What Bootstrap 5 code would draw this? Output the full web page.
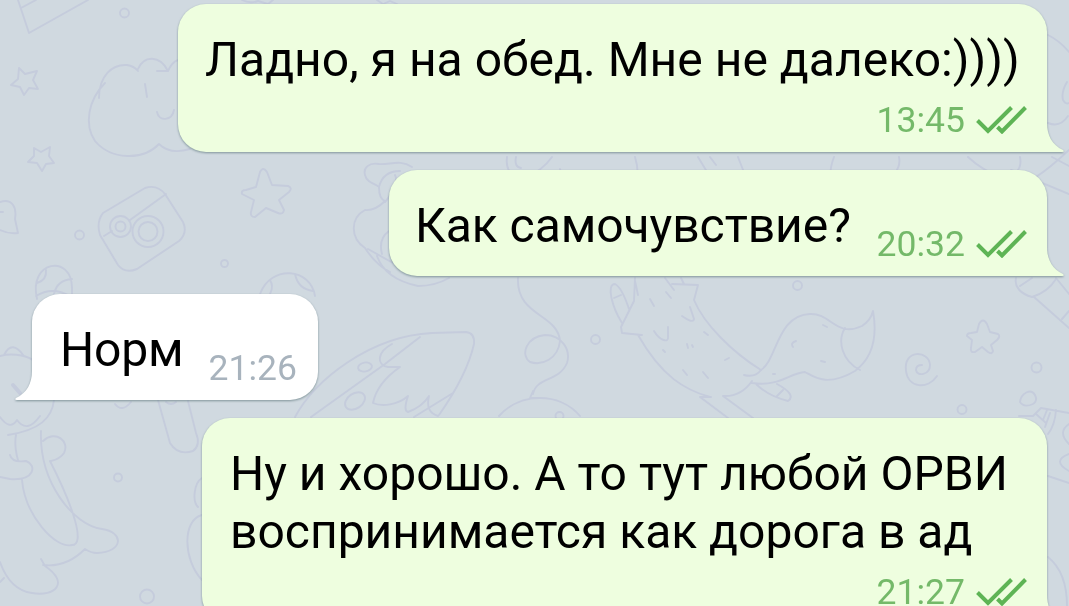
<!DOCTYPE html>
<html lang="ru">
<head>
  <meta charset="UTF-8" />
  <meta name="viewport" content="width=device-width, initial-scale=1.0"/>
  <title>Чат</title>
  <link href="https://cdn.jsdelivr.net/npm/bootstrap@5.3.0/dist/css/bootstrap.min.css" rel="stylesheet"/>
  <style>
    :root {
      --chat-bg: #d0d9e0;
      --doodle: #c5ccdc;
      --bubble-out: #eefedf;
      --time-out: #74b969;
      --check: #5eb455;
      --time-in: #a8b3bd;
    }
    body {
      background-color: var(--chat-bg);
      font-family: Roboto, sans-serif;
      color: #000;
    }
    .chat {
      width: 1069px;
      height: 606px;
      padding: 4px 22px 0 32px;
      gap: 18px;
    }
    .wallpaper {
      fill: none;
      stroke: var(--doodle);
      stroke-width: 1.9;
      stroke-linecap: round;
      stroke-linejoin: round;
    }
    .bubble {
      border-radius: 28px;
      padding: 27px 28px 0;
      font-size: 48px;
      line-height: 58px;
      white-space: nowrap;
      filter: drop-shadow(0 1.5px .8px rgba(85, 110, 115, .65));
    }
    .bubble-out {
      background-color: var(--bubble-out);
      border-bottom-right-radius: 0;
    }
    .bubble-in {
      background-color: #fff;
      border-bottom-left-radius: 0;
    }
    .tail {
      bottom: 0;
      width: 18px;
      height: 29px;
    }
    .bubble-out .tail {
      left: calc(100% - 1px);
      fill: var(--bubble-out);
    }
    .bubble-in .tail {
      right: calc(100% - 1px);
      fill: #fff;
    }
    .msg-1 { width: 869px; height: 148px; padding-left: 27px; letter-spacing: .02px; }
    .msg-2 { width: 658px; height: 106px; padding-left: 26px; letter-spacing: -.06px; }
    .msg-3 { width: 286px; height: 106px; letter-spacing: -.2px; }
    .msg-4 { width: 845px; height: 206px; }
    .stamp {
      right: 20px;
      bottom: 18px;
      gap: 11px;
      font-size: 35.5px;
      line-height: 28px;
      letter-spacing: 0;
      color: var(--time-out);
    }
    .bubble-in .stamp {
      right: 21px;
      color: var(--time-in);
    }
    .ticks {
      width: 51px;
      height: 28px;
      fill: none;
      stroke: var(--check);
      stroke-width: 4;
    }
  </style>
</head>
<body class="overflow-hidden">
  <!-- Обои чата -->
  <svg class="wallpaper position-absolute top-0 start-0" width="1069" height="606" viewBox="0 0 1069 606">
    <path d="M18 0 29 33 88 0M21 8 36 0"/>
    <circle cx="124.500" cy="13" r="4.500"/>
    <path d="M19 68 25 74 37 71 33 80 38 89 29 88 24 95 20 87 11 85 18 79Z"/>
    <path d="M34 148 41 152 50 147 49 156 54 163 46 164 42 171 37 163 28 162 34 156Z"/>
    <!-- Облако -->
    <path d="M99 98C99 76 112 64 127 65Q134 66 138 71M138 69C144 55 160 55 168 71L157 71M168 71Q172 62 178 60M105 83C88 100 84 125 95 141C111 160 143 161 159 144Q170 155 190 149M145 84 147 97M157 112C159 122 172 121 174 110"/>
    <path d="M0 202C12 198 17 207 15 219L18 233Q8 234 0 230M0 212 3 212"/>
    <!-- Фотоаппарат -->
    <path d="M103 213 145 188Q157 184 165 194L183 222Q188 233 179 241L137 269Q125 274 118 265L100 235Q96 222 103 213ZM104 236 112 231M130 220 166 194"/>
    <circle cx="120.500" cy="226.500" r="10.500"/><circle cx="120.500" cy="226.500" r="5"/>
    <circle cx="148" cy="231.500" r="15.500"/><circle cx="148" cy="231.500" r="9.500"/>
    <circle cx="79.500" cy="235" r="4.500"/><circle cx="224.500" cy="263.500" r="3.500"/>
    <path d="M260 172Q263 166 267 172L272 185 288 186Q293 188 289 192L279 200 284 210Q283 215 278 213L266 208 255 217Q250 217 251 212L254 200 242 194Q241 190 246 190L256 187Z"/>
    <path d="M37 299C28 260 72 254 72 288V299M37 283Q47 280 46 270M72 279Q57 280 54 294M36 296Q52 286 70 296"/>
    <path d="M260 294C271 264 311 268 315 296M270 280Q274 286 270 294M295 274Q298 289 313 291"/>
    <!-- Космонавт -->
    <path d="M412 167C400 159 390 165 379 164C369 162 363 168 365 175C367 183 374 183 379 187Q383 171 400 171M379 187Q379 199 385 201Q375 211 365 210C350 218 350 238 365 248Q376 265 390 272M385 202Q400 185 395 175M382 254Q378 239 389 231M368 249 393 263M377 256Q385 279 418 286 435 286 449 278"/>
    <path d="M0 356C15 352 30 357 34 361M4 355Q12 339 24 356M54 400C52 418 40 430 8 435M0 417Q10 431 17 420Q27 434 40 416M16 435C14 445 17 457 18 460M10 455Q12 463 26 461C37 465 35 481 10 479L0 477M41 431C39 482 73 525 102 529 124 532 124 552 97 553Q91 553 85 549C74 560 59 567 43 565M50 461C75 510 85 545 72 545C55 549 25 515 22 480M43 441C56 429 70 442 64 453Q60 459 51 461M41 559 45 566C70 583 55 597 32 593Q10 590 0 562M0 582 4 578"/>
    <path d="M13 385 20 393" stroke-width="4"/>
    <path d="M158 400 170 443Q178 456 193 451 201 445 196 433L188 401"/>
    <path d="M115 404Q122 413 131 402M166 402Q171 406 176 402"/>
    <circle cx="118" cy="477.500" r="4"/><circle cx="147" cy="596.500" r="7"/>
    <path d="M202 478C194 483 192 501 198 507M202 515C182 520 183 560 202 580"/>
    <!-- Ракета -->
    <path d="M295 417C315 380 370 336 432 333L466 332Q475 333 474 344 467 375 439 415M311 417 385 364 420 337M392 344C377 352 376 365 388 367L400 367Q377 383 373 403C382 407 398 405 408 396Q403 411 408 412 422 407 429 396 425 412 438 416M414 417 453 393"/>
    <ellipse cx="365" cy="367" rx="7" ry="4.500" transform="rotate(-10 365 367)"/><ellipse cx="355" cy="401" rx="11" ry="7.500" transform="rotate(-35 355 401)"/>
    <!-- Верёвочка шарика -->
    <path d="M518 278C516 316 558 314 560 341C558 359 542 366 530 362C520 355 526 337 545 335C562 335 571 350 567 363C559 382 536 377 533 394M533 391 530 398 538 398M499 416C520 392 560 392 580 416"/>
    <circle cx="559.500" cy="416" r="4"/><circle cx="595.500" cy="339.500" r="4.500"/>
    <!-- Лиса -->
    <path d="M635 278 634 301 621 327 622 333 642 335M635 281 638 295M622 323C612 307 606 284 615 284C621 287 626 300 629 309M614 298 621 295M638 335C662 377 685 390 710 397M711 397Q704 397 700 397L728 418M665 278 674 290M672 284 698 285 694 300C704 324 732 352 761 370M681 278 684 284M650 299 654 306M666 292 671 298M654 331C660 341 669 343 668 337L668 327M682 316Q693 324 694 319L690 307M704 332 708 335M687 344 688 348M692 345 693 347M663 350 665 352M683 370 687 375M703 372 708 378M725 360 729 358"/>
    <path d="M744 375Q755 378 761 370C777 360 777 315 810 314C831 313 836 338 862 326Q871 320 873 311C878 339 871 359 855 371C826 388 813 376 805 372C789 373 780 387 752 383M845 328C837 341 842 361 860 370M752 381Q741 397 723 396L753 418M756 384Q768 396 788 401C794 397 790 391 777 384M777 396 783 390M796 341Q790 343 793 347M823 325 827 327M821 361 825 362M773 374 775 374"/>
    <circle cx="797.500" cy="285.500" r="4.500"/>
    <path d="M937 376C928 390 908 388 906 371C903 349 929 350 930 365C930 375 917 377 916 370Q916 365 922 365"/>
    <path d="M979 324Q983 317 987 324L990 332 998 334Q1001 336 997 340L991 345 993 351Q992 355 988 352L982 347 975 352Q970 353 971 348L972 340 967 336Q967 333 971 333L977 332Z"/>
    <circle cx="1036.500" cy="367.500" r="5"/><circle cx="962" cy="409.500" r="4.500"/>
    <path d="M1020 402C1021 393 1031 388 1035 395Q1038 401 1033 404Q1024 408 1020 402Z"/>
    <path d="M1016 278C1014 287 1021 294 1032 297Q1048 292 1056 279M1020 286 1032 278M1034 297 1069 328M1062 319 1069 311M1056 278 1069 294"/>
    <path d="M1019 416 1033 416 1041 408 1069 413M1036 414 1046 423M1047 410 1043 420M1056 410Q1055 425 1048 434M1050 413 1045 427M1069 424Q1057 432 1069 444M1069 454Q1051 461 1069 471M1048 476 1069 483M1048 557C1064 570 1067 590 1067 606"/>
    <path d="M1048 35Q1060 41 1069 52M1067 82Q1061 92 1063 100 1066 105 1069 103M1048 123Q1060 128 1068 116M968 157C982 170 992 173 1006 180M1020 157Q1022 167 1016 172M1069 150Q1050 168 1036 177M1011 170 1069 194M1052 157 1069 166"/>
    <path d="M242 0Q250 4 258 1L268 4 273 0M377 0 383 4 390 1 397 4"/>
    <!-- Между пузырями -->
    <path d="M507 157C505 172 514 179 526 177Q542 171 552 157M516 157Q514 167 521 168M560 169 564 180M635 157Q639 170 637 180M698 157 712 180M710 157 716 165M738 157 747 180M834 157Q829 170 831 180M899 157Q901 166 894 174L898 180"/>
  </svg>

  <!-- Сообщения -->
  <div class="chat position-relative d-flex flex-column overflow-hidden">
    <div class="bubble bubble-out msg-1 position-relative align-self-end flex-shrink-0">
      Ладно, я на обед. Мне не далеко:))))
      <div class="stamp position-absolute d-flex align-items-center">
        <span>13:45</span>
        <svg class="ticks" viewBox="0 0 51 28"><path d="M1.500 14.500 12 25 35.500 1.500M21.500 21 26 25.500 49.500 1.500"/></svg>
      </div>
      <svg class="tail position-absolute" viewBox="0 0 18 29"><path d="M0 0H1C1 12 6 22 17 27Q19 29 16 29H0Z"/></svg>
    </div>

    <div class="bubble bubble-out msg-2 position-relative align-self-end flex-shrink-0">
      Как самочувствие?
      <div class="stamp position-absolute d-flex align-items-center">
        <span>20:32</span>
        <svg class="ticks" viewBox="0 0 51 28"><path d="M1.500 14.500 12 25 35.500 1.500M21.500 21 26 25.500 49.500 1.500"/></svg>
      </div>
      <svg class="tail position-absolute" viewBox="0 0 18 29"><path d="M0 0H1C1 12 6 22 17 27Q19 29 16 29H0Z"/></svg>
    </div>

    <div class="bubble bubble-in msg-3 position-relative align-self-start flex-shrink-0">
      Норм
      <div class="stamp position-absolute d-flex align-items-center">
        <span>21:26</span>
      </div>
      <svg class="tail position-absolute" viewBox="0 0 18 29"><path d="M18 0H17C17 12 12 22 1 27Q-1 29 2 29H18Z"/></svg>
    </div>

    <div class="bubble bubble-out msg-4 position-relative align-self-end flex-shrink-0">
      Ну и хорошо. А то тут любой ОРВИ<br>
      воспринимается как дорога в ад
      <div class="stamp position-absolute d-flex align-items-center">
        <span>21:27</span>
        <svg class="ticks" viewBox="0 0 51 28"><path d="M1.500 14.500 12 25 35.500 1.500M21.500 21 26 25.500 49.500 1.500"/></svg>
      </div>
      <svg class="tail position-absolute" viewBox="0 0 18 29"><path d="M0 0H1C1 12 6 22 17 27Q19 29 16 29H0Z"/></svg>
    </div>
  </div>

  <script src="https://cdn.jsdelivr.net/npm/bootstrap@5.3.0/dist/js/bootstrap.bundle.min.js"></script>
</body>
</html>
